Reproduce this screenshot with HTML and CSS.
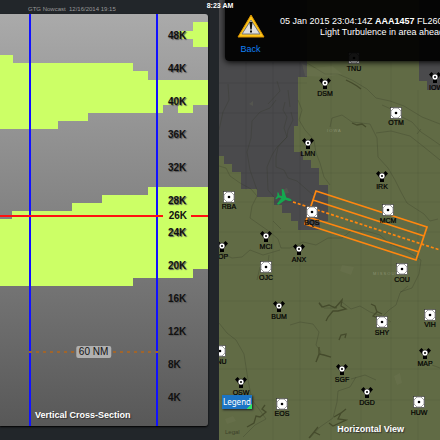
FILE: index.html
```html
<!DOCTYPE html>
<html lang="en">
<head>
    <meta charset="utf-8">
    <meta name="viewport" content="width=device-width, initial-scale=1">
    <title>Turbulence Nowcast</title>
    <link rel="stylesheet" href="styles.css">
</head>
<body>
<main class="app">
    <section class="profile">
        <p class="nowcast">GTG Nowcast&nbsp; 12/16/2014 19:15</p>
        <div class="chart">
            <svg class="layer" viewBox="0 14 208 412" preserveAspectRatio="none" aria-hidden="true">
                <g class="turbulence">
                    <path d="M193 22H208V47H193V39H178V31H193Z"/>
                    <path d="M0 55H13V63H133V71H148V80H208V105H193V113H178V105H163V113H88V121H58V129H0Z"/>
                    <path d="M0 219H12V211H72V203H102V195H148V187H208V269H193V278H133V286H0Z"/>
                </g>
                <path class="bound" d="M30 14V426M157 14V426"/>
                <path class="range" d="M29 352H158"/>
            </svg>
            <ol class="axis">
                <li>48K</li>
                <li>44K</li>
                <li>40K</li>
                <li>36K</li>
                <li>32K</li>
                <li>28K</li>
                <li>24K</li>
                <li>20K</li>
                <li>16K</li>
                <li>12K</li>
                <li>8K</li>
                <li>4K</li>
            </ol>
            <div class="level"><span>26K</span></div>
            <span class="distance">60 NM</span>
            <h2 class="chart-title">Vertical Cross-Section</h2>
        </div>
    </section>

    <section class="map">
        <svg class="layer" viewBox="219 0 221 440" preserveAspectRatio="xMinYMin slice">
            <defs>
                <g id="vor">
                    <rect x="-5.500" y="-5.500" width="11" height="11" fill="#fff" stroke="#333" stroke-width=".6"/>
                    <path d="M-5-2L-2-5H2L5-2V2L2 5H-2L-5 2Z" fill="none" stroke="#777" stroke-width=".7"/>
                    <circle r="1.3"/>
                </g>
                <g id="vortac">
                    <path d="M-6-2.500L-3.500-5L-.5-2L-2.500 1.500ZM6-2.500L3.500-5L.5-2L2.500 1.500ZM-2 2.500H2V6H-2Z"/>
                    <circle r="3" fill="#fff" stroke="#111" stroke-width=".6"/>
                    <circle r="1"/>
                </g>
            </defs>

            <!-- smooth air -->
            <path class="clear" d="M219 0H307V77H298V126H294V152H303V160H311V168H319V185H328V221H320V230H298V221H291V213H282V205H274V197H257V189H241V172H232V164H224V156H219Z"/>
            <path class="clear" d="M419 0H440V90H427V81H419Z"/>

            <!-- state and county lines, rivers -->
            <path class="county" d="M219 83H307M219 113H298M219 146H440M219 173H440M219 202H440M219 232H440M219 265H440M219 301H440M219 338H440M219 369H440M219 400H440M246 62V190M273 62V440M300 62V440M331 62V440M361 80V440M391 62V440M418 90V440"/>
            <path class="river" d="M276 100L270 108L260 112L252 121L251 138L247 152L250 170L257 190M285 102L283 110L287 117L284 128L287 137L278 147L276 157L276 167L284 170L288 178L297 181L305 188L313 195M291 112L293 120L288 130L287 137L277 147L272 155L267 167L268 190L274 197M298 100L302 110L299 120L305 130L314 140L316 153L320 163L324 177L330 185"/>
            <path class="river" d="M219 130L223 112L229 100L228 84M277 81L280 91L268 104M288 90L290 107M307 63L317 69L325 74L338 74L352 80L367 89L376 98L390 101L404 106L422 117L440 124M330 127L332 118L342 115L352 122L370 124L377 138L378 157L388 168L395 180L401 192L407 203L424 214L430 221L438 219M382 105L391 109L400 116L412 122L421 132L430 138L440 145M376 133L391 131L410 136L424 147L440 160M421 129L417 134"/>
            <path class="river" d="M219 166L226 168L230 176L240 183L251 189L257 196L252 206L250 218L260 225L270 232L278 239L281 248L290 248L303 242L316 245L328 238L342 238L352 230L366 231L380 235L390 244L407 251L421 260L419 274L412 288L400 292M219 252L232 258L242 257L250 250L263 255L280 250M269 255L268 263L260 267L257 280M273 221L281 229"/>
            <path class="river" d="M319 302L324 308L334 308L342 302L351 309L360 306L370 312L382 316L391 322M290 325L300 322L313 324L319 332L316 345L321 352L316 362M408 286L400 293L396 305L389 310L380 319M356 377L350 387L338 391L337 402L333 418L320 427L310 438M219 323L227 333L236 340L244 354L246 367L248 380L252 400L259 409L266 419L255 425L243 437M351 379L365 375L376 380M432 365L440 368"/>
            <path class="lake" d="M352 123L357 125L362 124L366 127M346 80L352 83L357 86L361 89M319 303L322 307L329 305L335 308L342 300L341 306L346 309L338 311L333 311L328 317L326 321M337 308L331 306M319 347L319 354L324 355L331 357M319 354L316 362M371 304L375 306L377 312L373 316L378 318L382 322M376 311L382 314M339 340L341 335L346 334L345 338M334 417L341 413L338 419L346 420L333 426L329 423M341 413L346 409M309 438L314 432L320 435M314 432L318 427M265 405L262 409L266 412L260 417L256 416L254 423L247 427M350 430L356 426L363 430"/>
            <path class="town" d="M249 104l4-3v5zM302 64l12 4 18-2 10 8-16 3-21-1zM282 190l5-2 2 5-5 1zM342 265l12 2-3 8-11-4zM225 419l8-3 3 5-9 3zM394 376l6-3 2 10-5 2z"/>
            <text class="region" x="327" y="132">I O W A</text>
            <text class="region" x="373" y="275">M I S S O U R I</text>

            <!-- alert area along the route -->
            <g class="route">
                <path d="M316 191L427 227L416 260L305 224ZM313 200L424 236M308 217L419 252"/>
                <path class="track" d="M293 202L440 250"/>
            </g>
            <path class="plane" transform="translate(284 198) rotate(108)" d="M0-8C1-8 1.200-6 1.200-4V-2L8 3V5L1.200 2.500L1 5L3.500 7V8L0 7L-3.500 8V7L-1 5L-1.200 2.500L-8 5V3L-1.200-2V-4C-1.200-6-1-8 0-8Z"/>

            <g>
                <use href="#vor" x="354" y="58"/>
                <use href="#vor" x="396" y="113"/>
                <use href="#vor" x="229" y="197"/>
                <use href="#vor" x="312" y="212"/>
                <use href="#vor" x="388" y="210"/>
                <use href="#vor" x="266" y="267"/>
                <use href="#vor" x="402" y="269"/>
                <use href="#vor" x="430" y="315"/>
                <use href="#vor" x="382" y="322"/>
                <use href="#vor" x="220" y="351"/>
                <use href="#vor" x="282" y="404"/>
                <use href="#vor" x="419" y="402"/>
                <use href="#vortac" x="325" y="83"/>
                <use href="#vortac" x="435" y="77"/>
                <use href="#vortac" x="308" y="143"/>
                <use href="#vortac" x="382" y="176"/>
                <use href="#vortac" x="266" y="236"/>
                <use href="#vortac" x="222" y="246"/>
                <use href="#vortac" x="299" y="249"/>
                <use href="#vortac" x="279" y="306"/>
                <use href="#vortac" x="425" y="353"/>
                <use href="#vortac" x="342" y="369"/>
                <use href="#vortac" x="241" y="382"/>
                <use href="#vortac" x="367" y="392"/>
            </g>
            <g class="station">
                <text x="354" y="71">TNU</text>
                <text x="396" y="125">OTM</text>
                <text x="229" y="209">RBA</text>
                <text x="312" y="225">BQS</text>
                <text x="388" y="223">MCM</text>
                <text x="266" y="280">OJC</text>
                <text x="402" y="282">COU</text>
                <text x="430" y="327">VIH</text>
                <text x="382" y="335">SHY</text>
                <text x="219" y="364">CNU</text>
                <text x="282" y="416">EOS</text>
                <text x="419" y="415">HUW</text>
                <text x="325" y="96">DSM</text>
                <text x="436" y="90">IOW</text>
                <text x="308" y="156">LMN</text>
                <text x="382" y="189">IRK</text>
                <text x="266" y="249">MCI</text>
                <text x="221" y="259">TOP</text>
                <text x="299" y="262">ANX</text>
                <text x="279" y="319">BUM</text>
                <text x="425" y="366">MAP</text>
                <text x="342" y="382">SGF</text>
                <text x="241" y="395">OSW</text>
                <text x="367" y="405">DGD</text>
            </g>
        </svg>

        <div class="alert" role="alert">
            <div class="alert-side">
                <svg class="warning" viewBox="0 0 28 24" aria-hidden="true">
                    <path d="M14 1L27 23H1Z" fill="#ffc61a" stroke="#d99200" stroke-linejoin="round"/>
                    <path d="M14 6L23 20H5Z" fill="#ddd" stroke="#777"/>
                    <path d="M12.500 8H15.500L14.700 15.500H13.300ZM13 16.500H15V18.500H13Z" fill="#111"/>
                </svg>
                <button class="back" type="button">Back</button>
            </div>
            <div class="message">
                <p>05 Jan 2015 23:04:14Z <b>AAA1457</b> FL260 F</p>
                <p class="detail">Light Turbulence in area ahead</p>
            </div>
        </div>
        <button class="legend" type="button">Legend</button>
        <a class="legal" href="#">Legal</a>
        <h2 class="map-title">Horizontal View</h2>
    </section>
    <time class="clock">8:23 AM</time>
</main>
</body>
</html>
```
FILE: styles.css
```css
* {
    box-sizing: border-box;
}
body, p, h2, ol {
    margin: 0;
    padding: 0;
}
body {
    background: #22262a;
    font-family: "Liberation Sans", Arial, sans-serif;
    font-size: 9px;
    color: #fff;
}
.app {
    position: relative;
    display: grid;
    grid-template-columns: 219fr 221fr;
    grid-template-rows: 100%;
    height: 100vh;
    overflow: hidden;
}
h2 {
    font-size: 9px;
    line-height: 12px;
    text-shadow: 1px 1px 1px #333;
}
.layer {
    display: block;
    width: 100%;
    height: 100%;
}
.clock {
    position: absolute;
    top: 0;
    left: 0;
    right: 0;
    text-align: center;
    font-size: 7px;
    font-weight: bold;
    line-height: 12px;
}

/* vertical cross-section */
.profile {
    min-width: 0;
    display: flex;
    flex-direction: column;
    padding: 4px 11px 14px 0;
}
.nowcast {
    padding-left: 28px;
    height: 10px;
    font-size: 6px;
    line-height: 10px;
    color: #999;
}
.chart {
    position: relative;
    flex: 1;
    min-height: 0;
    overflow: hidden;
    border-radius: 0 3px 3px 0;
    background: linear-gradient(#aaa, #585858);
    box-shadow: 0 1px 2px #000;
}
.turbulence {
    fill: #cf6;
}
.bound {
    fill: none;
    stroke: #11f;
    stroke-width: 2;
}
.range {
    stroke: #a0652c;
    stroke-width: 2;
    stroke-dasharray: 3 4;
}
.axis {
    position: absolute;
    top: 0;
    right: 0;
    bottom: 0;
    width: 40px;
    display: flex;
    flex-direction: column;
    padding: 5px 0 12px;
    list-style: none;
}
.axis li {
    flex: 1;
    display: flex;
    align-items: center;
    font-size: 10px;
    font-weight: bold;
    color: #111;
    text-shadow: 1px 1px 1px #555;
}
.level {
    position: absolute;
    top: 49%;
    left: 0;
    right: 0;
    transform: translateY(-50%);
    display: flex;
    align-items: center;
    font-size: 10px;
    line-height: 12px;
    font-weight: bold;
    color: #111;
}
.level::before, .level::after {
    content: "";
    height: 2px;
    background: #f11;
}
.level::before {
    flex: 1;
}
.level::after {
    width: 17px;
}
.level span {
    padding: 0 4px 0 6px;
}
.distance {
    position: absolute;
    top: 82%;
    left: 45%;
    transform: translate(-50%, -50%);
    padding: 0 3px;
    border-radius: 2px;
    background: #b0b0b0;
    color: #111;
    font-size: 10px;
    line-height: 12px;
    white-space: nowrap;
}
.chart-title {
    position: absolute;
    left: 35px;
    bottom: 5px;
}

/* map */
.map {
    position: relative;
    min-width: 0;
    overflow: hidden;
    background: #616b45;
}
.clear {
    fill: #4a4a4c;
}
.county {
    fill: none;
    stroke: #000;
    stroke-opacity: .06;
}
.river {
    fill: none;
    stroke: #2c3020;
    stroke-opacity: .35;
    stroke-width: .7;
}
.lake {
    fill: none;
    stroke: #454b2c;
    stroke-width: 1.3;
}
.town {
    fill: #7b825f;
    opacity: .2;
}
.region {
    fill: #8b9170;
    font-size: 4px;
}
.route {
    fill: none;
    stroke: #ff870f;
    stroke-width: 1.7;
}
.track {
    stroke-dasharray: 3 2;
}
.plane {
    fill: #14a84f;
}
.station {
    font-size: 7px;
    text-anchor: middle;
    fill: #000;
    stroke: #000;
    stroke-width: .2;
}
.alert {
    position: absolute;
    top: -4px;
    left: 6px;
    display: flex;
    width: 300px;
    height: 65px;
    border-radius: 4px;
    background: rgba(0, 0, 0, .93);
    box-shadow: 0 1px 6px #000;
}
.alert-side {
    display: flex;
    flex-direction: column;
    align-items: center;
    gap: 5px;
    width: 51px;
    padding-top: 18px;
}
.warning {
    width: 28px;
    height: 24px;
}
.back {
    padding: 0;
    border: 0;
    background: none;
    color: #1180f5;
    font: 9px/12px "Liberation Sans", Arial, sans-serif;
}
.message {
    width: 204px;
    margin-left: 4px;
    padding-top: 20px;
    line-height: 11px;
    white-space: nowrap;
}
.detail {
    text-align: center;
}
.legend {
    position: absolute;
    left: 3px;
    bottom: 31px;
    padding: 0 1px;
    border: 0;
    background: linear-gradient(135deg, #1c74c4 88%, #2be36a 88%);
    box-shadow: 1px 1px 2px #222;
    color: #fff;
    font: 8px/14px "Noto Sans", sans-serif;
}
.legal {
    position: absolute;
    left: 6px;
    bottom: 4px;
    font-size: 6px;
    line-height: 8px;
    color: #3c4129;
    text-decoration: none;
}
.map-title {
    position: absolute;
    right: 36px;
    bottom: 5px;
}
```
